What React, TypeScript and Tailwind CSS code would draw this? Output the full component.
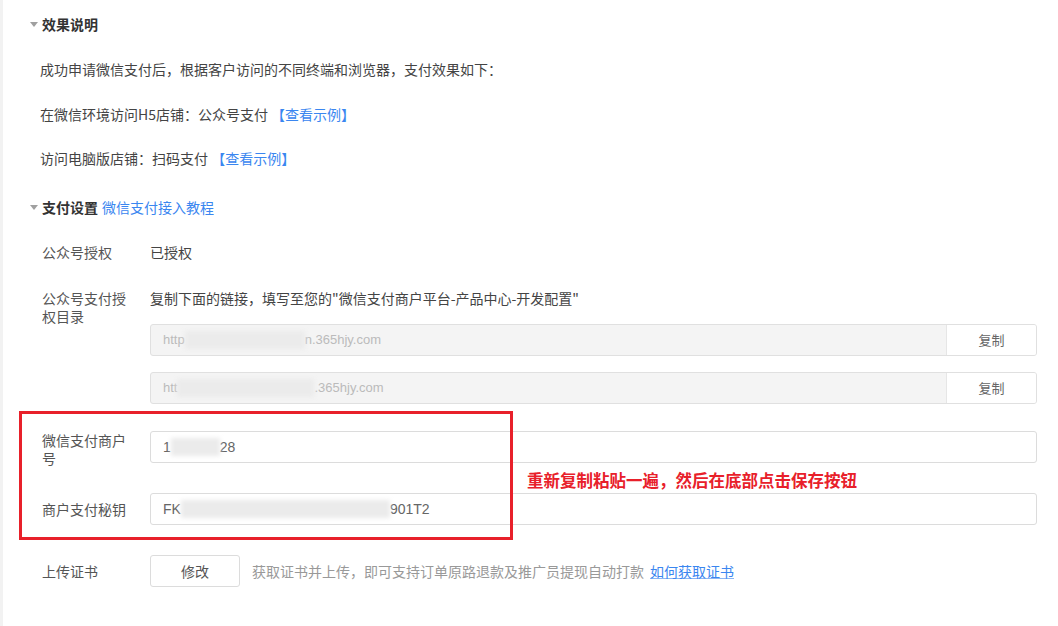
import React from 'react';

function Caret() {
    return <span className="inline-block w-0 h-0 border-l-[4px] border-r-[4px] border-t-[5px] border-l-transparent border-r-transparent border-t-[#a0a0a0]"></span>;
}

function Blur({ w }: { w: number }) {
    return <span className="inline-block h-[18px] bg-[#ebebeb] blur-[2px] align-middle" style={{ width: w }}></span>;
}

function CopyInput({ pre, blur, post }: { pre: string; blur: number; post: string }) {
    return (
        <div className="flex h-[32px] w-[887px] rounded-[3px] border border-[#e0e0e0] bg-[#f4f4f4] overflow-hidden">
            <div className="flex-1 flex items-center px-[12px] text-[13px] text-[#bbb] font-['Liberation_Sans','Noto_Sans_CJK_SC',sans-serif]">
                <span>{pre}</span>
                <Blur w={blur} />
                <span>{post}</span>
            </div>
            <button className="w-[90px] shrink-0 bg-white border-l border-[#e6e6e6] text-[13px] text-[#666]">复制</button>
        </div>
    );
}

function TextInput({ pre, blur, post }: { pre: string; blur: number; post: string }) {
    return (
        <div className="flex items-center h-[32px] w-[887px] rounded-[3px] border border-[#dcdcdc] bg-white px-[12px] text-[14px] text-[#666] font-['Liberation_Sans','Noto_Sans_CJK_SC',sans-serif]">
            <span>{pre}</span>
            <Blur w={blur} />
            <span>{post}</span>
        </div>
    );
}

export default function App() {
    return (
        <div className="relative min-h-[626px] bg-white shadow-[inset_3px_0_0_#f2f2f2] font-['Noto_Sans_CJK_SC','Noto_Sans',sans-serif] text-[14px] text-[#333]">
            <div className="pt-[14px] pl-[30px]">
                {/* 效果说明 */}
                <div className="flex items-center h-[20px] gap-[4px]">
                    <Caret />
                    <span className="font-bold text-[14px] leading-[20px]">效果说明</span>
                </div>
                <div className="pl-[10px] text-[#444]">
                    <p className="mt-[25px] leading-[20px]">成功申请微信支付后，根据客户访问的不同终端和浏览器，支付效果如下：</p>
                    <p className="mt-[25px] leading-[20px]">在微信环境访问H5店铺：公众号支付 <a className="text-[#3a86f0]">【查看示例】</a></p>
                    <p className="mt-[24px] leading-[20px]">访问电脑版店铺：扫码支付 <a className="text-[#3a86f0]">【查看示例】</a></p>
                </div>

                {/* 支付设置 */}
                <div className="mt-[29px] flex items-center h-[20px] gap-[4px]">
                    <Caret />
                    <span className="font-bold text-[14px] leading-[20px]">支付设置</span>
                    <a className="text-[#3a86f0] leading-[20px]">微信支付接入教程</a>
                </div>

                <div className="pl-[12px] text-[#555]">
                    <div className="mt-[25px] flex items-center h-[20px]">
                        <div className="w-[108px] shrink-0">公众号授权</div>
                        <div className="text-[#444]">已授权</div>
                    </div>

                    <div className="mt-[27px] flex items-start">
                        <div className="w-[108px] shrink-0 pr-[18px] leading-[18px]">公众号支付授权目录</div>
                        <div className="flex flex-col">
                            <div className="leading-[18px] text-[#444]">复制下面的链接，填写至您的"微信支付商户平台-产品中心-开发配置"</div>
                            <div className="mt-[17px]">
                                <CopyInput pre="http" blur={120} post="n.365hjy.com" />
                            </div>
                            <div className="mt-[16px]">
                                <CopyInput pre="htt" blur={137} post=".365hjy.com" />
                            </div>
                        </div>
                    </div>

                    <div className="mt-[27px] flex items-start">
                        <div className="w-[108px] shrink-0 pr-[18px] leading-[18px]">微信支付商户号</div>
                        <TextInput pre="1" blur={49} post="28" />
                    </div>

                    <div className="mt-[26px] flex items-center">
                        <div className="w-[108px] shrink-0">商户支付秘钥</div>
                        <TextInput pre="FK" blur={209} post="901T2" />
                    </div>

                    <div className="mt-[30px] flex items-center">
                        <div className="w-[108px] shrink-0">上传证书</div>
                        <button className="w-[90px] h-[32px] rounded-[3px] border border-[#dcdcdc] bg-white text-[#555]">修改</button>
                        <span className="ml-[12px] text-[#999]">获取证书并上传，即可支持订单原路退款及推广员提现自动打款</span>
                        <a className="ml-[6px] text-[#3a86f0] underline decoration-[#8bb6f5]">如何获取证书</a>
                    </div>
                </div>
            </div>

            {/* annotation overlay */}
            <div className="absolute left-[19px] top-[411px] w-[494px] h-[129px] border-[3px] border-[#e8202a] pointer-events-none"></div>
            <div className="absolute left-[527px] top-[470px] text-[16.5px] leading-[20px] font-bold text-[#e8202a]">重新复制粘贴一遍，然后在底部点击保存按钮</div>
        </div>
    );
}
